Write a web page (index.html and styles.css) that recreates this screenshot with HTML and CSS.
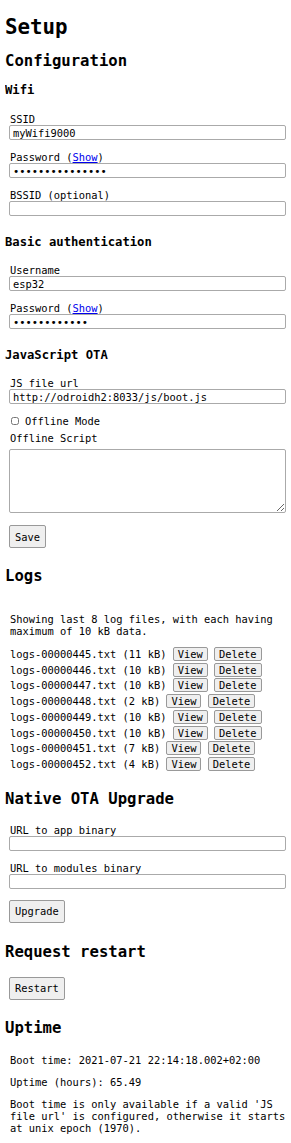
FILE: index.html
```html
<!DOCTYPE html>
<html>
<head>
  <title>Setup</title>
  <link rel="stylesheet" href="styles.css">
</head>
<body>
  <h1>Setup</h1>

  <h2>Configuration</h2>
  <form class="config">
    <h3>Wifi</h3>
    <div class="field">
      <label for="ssid">SSID</label>
      <input type="text" id="ssid" value="myWifi9000">
    </div>
    <div class="field">
      <label for="wifipass">Password (<a href="#">Show</a>)</label>
      <input type="password" id="wifipass" value="abcdefghijklmno">
    </div>
    <div class="field">
      <label for="bssid">BSSID (optional)</label>
      <input type="text" id="bssid">
    </div>

    <h3>Basic authentication</h3>
    <div class="field">
      <label for="user">Username</label>
      <input type="text" id="user" value="esp32">
    </div>
    <div class="field">
      <label for="authpass">Password (<a href="#">Show</a>)</label>
      <input type="password" id="authpass" value="abcdefghijkl">
    </div>

    <h3>JavaScript OTA</h3>
    <div class="field">
      <label for="jsurl">JS file url</label>
      <input type="text" id="jsurl" value="http://odroidh2:8033/js/boot.js">
    </div>
    <div class="check">
      <input type="checkbox" id="offline">
      <label for="offline">Offline Mode</label>
    </div>
    <div class="field">
      <label for="script">Offline Script</label>
      <textarea id="script"></textarea>
    </div>
    <button type="button" class="big save">Save</button>
  </form>

  <h2>Logs</h2>
  <div class="section">
    <p class="intro">Showing last 8 log files, with each having maximum of 10 kB data.</p>
    <div class="logs">
      <div>logs-00000445.txt (11 kB) <button>View</button> <button>Delete</button></div>
      <div>logs-00000446.txt (10 kB) <button>View</button> <button>Delete</button></div>
      <div>logs-00000447.txt (10 kB) <button>View</button> <button>Delete</button></div>
      <div>logs-00000448.txt (2 kB) <button>View</button> <button>Delete</button></div>
      <div>logs-00000449.txt (10 kB) <button>View</button> <button>Delete</button></div>
      <div>logs-00000450.txt (10 kB) <button>View</button> <button>Delete</button></div>
      <div>logs-00000451.txt (7 kB) <button>View</button> <button>Delete</button></div>
      <div>logs-00000452.txt (4 kB) <button>View</button> <button>Delete</button></div>
    </div>
  </div>

  <h2>Native OTA Upgrade</h2>
  <form class="section upgrade">
    <div class="field">
      <label for="appbin">URL to app binary</label>
      <input type="text" id="appbin">
    </div>
    <div class="field">
      <label for="modbin">URL to modules binary</label>
      <input type="text" id="modbin">
    </div>
    <button type="button" class="big">Upgrade</button>
  </form>

  <h2>Request restart</h2>
  <div class="section restart">
    <button type="button" class="big">Restart</button>
  </div>

  <h2>Uptime</h2>
  <div class="section uptime">
    <p>Boot time: 2021-07-21 22:14:18.002+02:00</p>
    <p>Uptime (hours): 65.49</p>
    <p>Boot time is only available if a valid 'JS file url' is configured, otherwise it starts at unix epoch (1970).</p>
  </div>
</body>
</html>
```

FILE: styles.css
```css
body {
  margin: 0 5px;
  font-family: "DejaVu Sans Mono", monospace;
  font-size: 10.4px;
  color: #000;
  background: #fff;
}
h1 {
  font-size: 20.8px;
  margin: 15px 0 13px;
}
h2 {
  font-size: 15.6px;
  margin: 19px 0 13px;
}
h1 + h2 {
  margin-top: 0;
}
h3 {
  font-size: 12.2px;
  margin: 19px 0 15px;
}
.config h3:first-child {
  margin-top: 0;
  margin-bottom: 16px;
}
.config, .section {
  padding-left: 4px;
}
.config h3 {
  margin-left: -4px;
}
.upgrade {
  padding-top: 3px;
  margin-bottom: 20px;
}
.restart {
  padding-top: 3px;
}
a {
  color: #00e;
}
.field {
  margin-bottom: 11px;
}
.field label {
  display: block;
  padding-left: 1px;
}
input[type=text], input[type=password], textarea {
  display: block;
  box-sizing: border-box;
  width: 277px;
  height: 15px;
  margin: 0;
  padding: 0 3px;
  border: 1px solid #aaa;
  border-radius: 2px;
  font-family: "DejaVu Sans Mono", monospace;
  font-size: 10.4px;
}
textarea {
  height: 64px;
  margin-top: 5px;
  resize: vertical;
}
.check {
  display: flex;
  align-items: center;
  gap: 6px;
  padding-left: 2px;
  margin-bottom: 5px;
}
.check input {
  width: 8px;
  height: 8px;
  margin: 0;
}
button {
  font-family: "DejaVu Sans Mono", monospace;
  font-size: 10.4px;
  background: #efefef;
  border: 1px solid #999;
  border-radius: 2px;
  padding: 0 4px;
  margin: 0;
  line-height: 12px;
  color: #000;
}
button.big {
  height: 23px;
  padding: 0 5px;
}
button.save {
  margin-top: 1px;
}
p {
  margin: 10px 0;
  padding-left: 1px;
}
p.intro {
  margin: 28px 0 10px;
}
.uptime p:first-child {
  margin-top: 17px;
}
.logs {
  margin-bottom: -2px;
}
.logs div {
  line-height: 15.7px;
  padding-left: 1px;
}
```
